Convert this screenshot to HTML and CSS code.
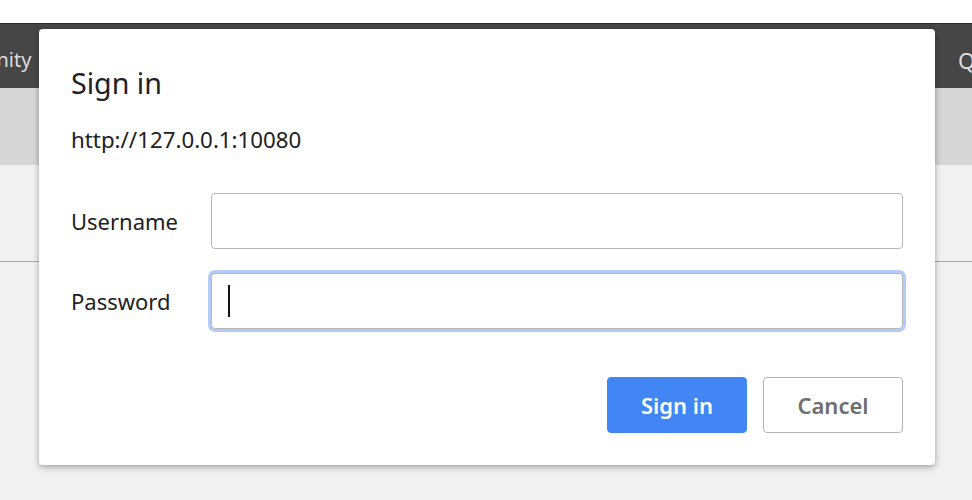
FILE: index.html
```html
<!DOCTYPE html>
<html lang="en">
<head>
<meta charset="utf-8">
<title>Sign in</title>
<link rel="stylesheet" href="styles.css">
</head>
<body>
<div class="page">
  <div class="topgap"></div>
  <nav class="navbar">
    <span class="nav-item nav-first">Community</span>
    <span class="nav-item nav-last">Quick</span>
  </nav>
  <div class="subbar"></div>
  <div class="content">
    <div class="panel"></div>
  </div>
</div>

<div class="dialog" role="dialog" aria-label="Sign in">
  <h1 class="dialog-title">Sign in</h1>
  <p class="dialog-origin">http://127.0.0.1:10080</p>
  <div class="form">
    <label class="label">Username</label>
    <div class="field"></div>
    <label class="label">Password</label>
    <div class="field field-focus"><span class="caret"></span></div>
  </div>
  <div class="actions">
    <button class="btn btn-primary">Sign in</button>
    <button class="btn btn-secondary">Cancel</button>
  </div>
</div>
</body>
</html>
```
FILE: styles.css
```css
html, body {
  margin: 0;
  padding: 0;
}
body {
  width: 972px;
  height: 500px;
  overflow: hidden;
  background: #f1f1f1;
  font-family: "Noto Sans", "Open Sans", sans-serif;
  color: #202124;
}
.page {
  display: flex;
  flex-direction: column;
}
.topgap {
  height: 23px;
  background: #ffffff;
}
.navbar {
  height: 64px;
  border-top: 1px solid #2c2c2c;
  background: #464646;
  display: flex;
  align-items: center;
  overflow: hidden;
  white-space: nowrap;
}
.nav-item {
  color: #dcdcdc;
  font-size: 20px;
  line-height: 28px;
  padding-top: 8px;
}
.nav-first {
  margin-left: -78px;
}
.nav-last {
  margin-left: auto;
  width: 14px;
  font-size: 22px;
}
.subbar {
  height: 77px;
  background: #d6d6d6;
}
.content {
  background: #f1f1f1;
}
.panel {
  height: 96px;
  border-bottom: 1px solid #ababab;
}

.dialog {
  position: absolute;
  left: 39px;
  top: 29px;
  width: 896px;
  box-sizing: border-box;
  padding: 36px 32px 32px 32px;
  background: #ffffff;
  border-radius: 4px;
  box-shadow: 0 2px 6px rgba(0, 0, 0, 0.35);
}
.dialog-title {
  margin: 0;
  font-size: 28.6px;
  line-height: 36px;
  font-weight: 400;
  color: #202124;
}
.dialog-origin {
  margin: 24px 0 0 0;
  font-size: 22.3px;
  line-height: 30px;
  color: #202124;
}
.form {
  margin-top: 38px;
  display: grid;
  grid-template-columns: 140px 1fr;
  row-gap: 24px;
  align-items: center;
}
.label {
  font-size: 22px;
  line-height: 30px;
  color: #202124;
}
.field {
  height: 56px;
  box-sizing: border-box;
  border: 1px solid #b7b7b7;
  border-radius: 4px;
  background: #ffffff;
  display: flex;
  align-items: center;
  padding-left: 16px;
}
.field-focus {
  box-shadow: 0 0 0 3px #b4cdf8;
}
.caret {
  width: 2px;
  height: 32px;
  background: #111111;
}
.actions {
  margin-top: 48px;
  display: flex;
  justify-content: flex-end;
  gap: 16px;
}
.btn {
  width: 140px;
  height: 56px;
  box-sizing: border-box;
  border-radius: 4px;
  font-family: "Noto Sans", "Open Sans", sans-serif;
  font-size: 22px;
  font-weight: 600;
  cursor: pointer;
}
.btn-primary {
  background: #4285f4;
  border: 1px solid #4285f4;
  color: #ffffff;
}
.btn-secondary {
  background: #ffffff;
  border: 1px solid #b5b5b5;
  color: #6e6e6e;
}
```
